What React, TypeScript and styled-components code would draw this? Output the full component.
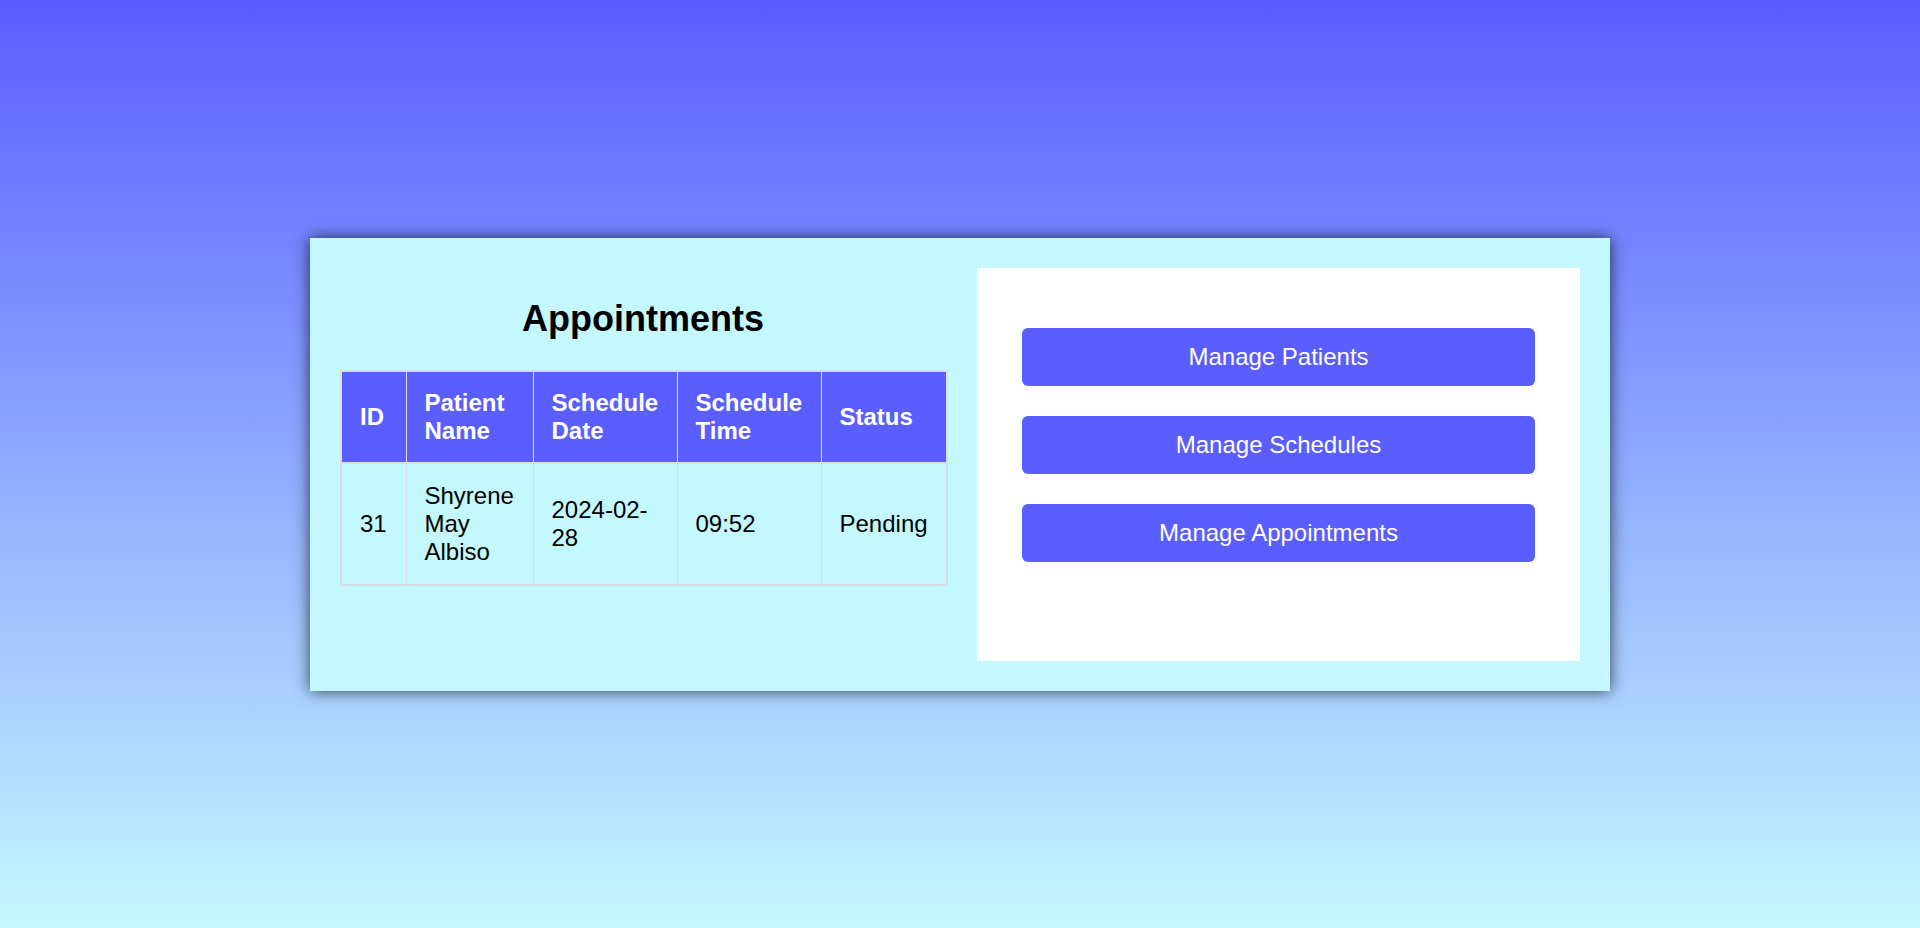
import React from 'react'
import styled, { createGlobalStyle } from 'styled-components'

const GlobalStyle = createGlobalStyle`
  html, body {
    margin: 0;
    padding: 0;
  }
  body {
    min-height: 100vh;
    background: linear-gradient(to bottom, #5a5cff, #c4f8ff);
    font-family: "Liberation Sans", Arial, sans-serif;
    font-size: 24px;
  }
`

const Page = styled.div`
  height: 928px;
  display: flex;
  align-items: center;
  justify-content: center;
`

const Card = styled.div`
  width: 1300px;
  box-sizing: border-box;
  padding: 30px;
  display: flex;
  gap: 31px;
  background-color: #c4f8ff;
  box-shadow: 0 0 15px rgba(0, 0, 0, 0.7);
`

const LeftColumn = styled.div`
  width: 606px;
  display: flex;
  flex-direction: column;
`

const Title = styled.h2`
  margin: 30px 0 30px;
  font-size: 36px;
  font-weight: bold;
  text-align: center;
  color: #000;
`

const Table = styled.table`
  width: 606px;
  border-collapse: collapse;
  border: 2px solid #ddd;
  table-layout: fixed;
`

const HeadCell = styled.th<{ $w: number }>`
  box-sizing: border-box;
  width: ${p => p.$w}px;
  padding: 17px 18px;
  border: 1px solid #ddd;
  border-bottom: 2px solid #ddd;
  background-color: #5b5eff;
  color: #fff;
  font-weight: bold;
  text-align: left;
`

const Cell = styled.td`
  box-sizing: border-box;
  padding: 18px;
  border: 1px solid #ddd;
  color: #000;
  text-align: left;
`

const Panel = styled.div`
  width: 603px;
  box-sizing: border-box;
  padding: 60px 45px 99px;
  background-color: #fff;
  display: flex;
  flex-direction: column;
  gap: 30px;
`

const NavButton = styled.button`
  height: 58px;
  border: none;
  border-radius: 6px;
  background-color: #5b5eff;
  color: #fff;
  font-family: "Liberation Sans", Arial, sans-serif;
  font-size: 24px;
  cursor: pointer;
`

const columns = [
  { label: 'ID', w: 65 },
  { label: 'Patient Name', w: 127 },
  { label: 'Schedule Date', w: 144 },
  { label: 'Schedule Time', w: 144 },
  { label: 'Status', w: 126 },
]

const appointments = [
  { id: 31, name: 'Shyrene May Albiso', date: '2024-02-28', time: '09:52', status: 'Pending' },
]

export default function App() {
  return (
    <>
      <GlobalStyle />
      <Page>
        <Card>
          <LeftColumn>
            <Title>Appointments</Title>
            <Table>
              <thead>
                <tr>
                  {columns.map(c => <HeadCell key={c.label} $w={c.w}>{c.label}</HeadCell>)}
                </tr>
              </thead>
              <tbody>
                {appointments.map(a => (
                  <tr key={a.id}>
                    <Cell>{a.id}</Cell>
                    <Cell>{a.name}</Cell>
                    <Cell>{a.date}</Cell>
                    <Cell>{a.time}</Cell>
                    <Cell>{a.status}</Cell>
                  </tr>
                ))}
              </tbody>
            </Table>
          </LeftColumn>
          <Panel>
            <NavButton>Manage Patients</NavButton>
            <NavButton>Manage Schedules</NavButton>
            <NavButton>Manage Appointments</NavButton>
          </Panel>
        </Card>
      </Page>
    </>
  )
}
